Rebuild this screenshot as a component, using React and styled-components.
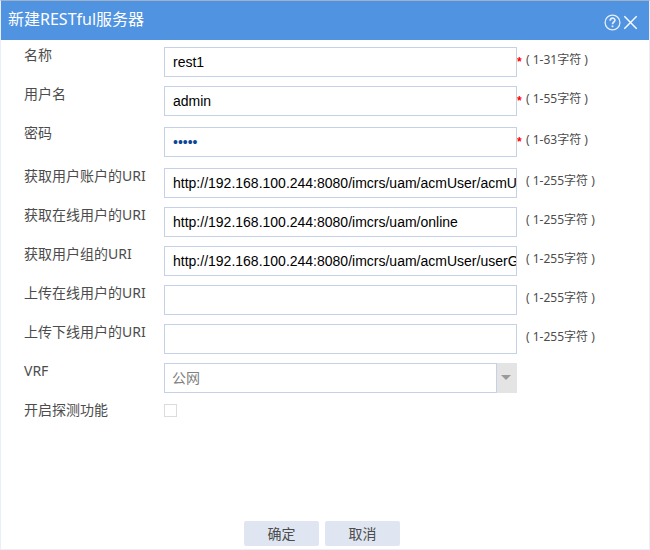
import React, { useState } from 'react'
import styled, { createGlobalStyle } from 'styled-components'

const GlobalStyle = createGlobalStyle`
  * {
    box-sizing: border-box;
  }

  body {
    margin: 0;
    background: white;
    color: #4c4c4c;
    font-family: 'Noto Sans', 'Noto Sans CJK SC', sans-serif;
    font-size: 14px;
  }
`

const Dialog = styled.form`
  min-height: 100vh;
  display: flex;
  flex-direction: column;
  border: 1px solid #e9eefa;
  border-top-color: #9fb2c9;
`

const Header = styled.header`
  height: 39px;
  padding: 0 10px 0 7px;
  background: #4f93e1;
  color: white;

  display: flex;
  justify-content: space-between;
  align-items: center;
`

const Title = styled.h1`
  margin: 0;
  font-size: 16px;
  font-weight: normal;
  line-height: 37px;
  align-self: flex-start;
`

const HeaderActions = styled.div`
  display: flex;
  align-items: center;
  gap: 1px;
  padding-top: 3px;
`

const IconButton = styled.button`
  display: flex;
  padding: 0;
  border: none;
  background: none;
  color: white;
  cursor: pointer;
`

const Fields = styled.div`
  flex: 1;
  padding: 7px 0 0 23px;
`

const Row = styled.div`
  display: grid;
  grid-template-columns: 140px minmax(0, 1fr) 132px;
  align-items: start;
  padding-bottom: 9px;
`

const Label = styled.label`
  line-height: 16px;
`

const Control = styled.div`
  position: relative;
  display: flex;
  padding: ${props => (props.$spaced ? '2px 0' : '0')};
`

const TextInput = styled.input`
  width: 100%;
  height: 30px;
  padding: 0 0 0 8px;
  border: 1px solid #c5d1e6;
  border-radius: 0;
  background: white;
  color: ${props => (props.type === 'password' ? '#0c4596' : 'black')};
  font-family: 'Liberation Sans', Arial, sans-serif;
  font-size: 14px;
  outline: none;
`

const Select = styled.select`
  appearance: none;
  width: 100%;
  height: 30px;
  padding: 0 28px 2px 7px;
  border: 1px solid #c5d1e6;
  border-right: none;
  border-radius: 0;
  background: white;
  color: #808080;
  font-family: inherit;
  font-size: 14px;
  outline: none;
`

const SelectArrow = styled.span`
  position: absolute;
  top: 0;
  right: 0;
  bottom: 0;
  width: 21px;
  padding: 0 2px 2px 0;
  border-left: 1px solid #c5d1e6;
  background: #e4e4e4;
  pointer-events: none;

  display: flex;
  justify-content: center;
  align-items: center;
`

const Checkbox = styled.input`
  appearance: none;
  width: 13px;
  height: 13px;
  margin: 2px 0 0;
  border: 1px solid #dcdcdc;
  background: white;

  &:checked {
    background: #4f93e1;
  }
`

const Hint = styled.div`
  display: flex;
  padding-top: ${props => (props.$spaced ? '6px' : '4px')};
  font-size: 12px;
  line-height: 18px;
  white-space: nowrap;
`

const Star = styled.span`
  width: 9px;
  color: #f00;
  font-family: 'Liberation Sans', Arial, sans-serif;
  font-weight: bold;
  line-height: 22px;
`

const Footer = styled.footer`
  display: flex;
  justify-content: center;
  gap: 6px;
  padding: 0 6px 3px 0;
`

const Button = styled.button`
  width: 75px;
  height: 25px;
  padding: 0;
  border: none;
  border-radius: 2px;
  background: #dfe6f2;
  color: #4c4c4c;
  font-family: inherit;
  font-size: 14px;
  line-height: 25px;
  cursor: pointer;
`

const HelpIcon = () => (
  <svg width='17' height='17' viewBox='0 0 17 17' fill='none' stroke='currentColor' opacity='0.85'>
    <circle cx='8.5' cy='8.5' r='7.4' strokeWidth='1.3' />
    <path d='M6.2 6.8C6.2 3.4 10.9 3.5 10.9 6.2C10.9 8 8.5 8 8.5 10.2' strokeWidth='1.7' />
    <path d='M8.5 11.4V13.2' strokeWidth='1.8' />
  </svg>
)

const CloseIcon = () => (
  <svg width='17' height='17' viewBox='0 0 17 17' fill='none' stroke='currentColor' strokeWidth='1.4'>
    <path d='M2.3 2.3L14.7 14.7M14.7 2.3L2.3 14.7' />
  </svg>
)

const fields = [
  { name: 'name', label: '名称', value: 'rest1', hint: '( 1-31字符 )', required: true },
  { name: 'user', label: '用户名', value: 'admin', hint: '( 1-55字符 )', required: true },
  { name: 'password', label: '密码', value: 'admin', hint: '( 1-63字符 )', required: true, type: 'password' },
  {
    name: 'accountUri',
    label: '获取用户账户的URI',
    value: 'http://192.168.100.244:8080/imcrs/uam/acmUser/acmUserList',
    hint: '( 1-255字符 )'
  },
  {
    name: 'onlineUri',
    label: '获取在线用户的URI',
    value: 'http://192.168.100.244:8080/imcrs/uam/online',
    hint: '( 1-255字符 )'
  },
  {
    name: 'groupUri',
    label: '获取用户组的URI',
    value: 'http://192.168.100.244:8080/imcrs/uam/acmUser/userGroup',
    hint: '( 1-255字符 )'
  },
  { name: 'uploadOnlineUri', label: '上传在线用户的URI', value: '', hint: '( 1-255字符 )' },
  { name: 'uploadOfflineUri', label: '上传下线用户的URI', value: '', hint: '( 1-255字符 )' }
]

const Field = ({ name, label, value, hint, required, type = 'text' }) => {
  const [text, setText] = useState(value)
  const spaced = type === 'password'

  return (
    <Row>
      <Label htmlFor={name}>{label}</Label>
      <Control $spaced={spaced}>
        <TextInput
          id={name}
          name={name}
          type={type}
          value={text}
          required={required}
          autoComplete='off'
          spellCheck={false}
          onChange={e => setText(e.target.value)}
        />
      </Control>
      <Hint $spaced={spaced}>
        <Star>{required && '*'}</Star>
        <span>{hint}</span>
      </Hint>
    </Row>
  )
}

const App = () => {
  return (
    <>
      <GlobalStyle />
      <Dialog onSubmit={e => e.preventDefault()}>
        <Header>
          <Title>新建RESTful服务器</Title>
          <HeaderActions>
            <IconButton type='button' aria-label='帮助'>
              <HelpIcon />
            </IconButton>
            <IconButton type='button' aria-label='关闭'>
              <CloseIcon />
            </IconButton>
          </HeaderActions>
        </Header>
        <Fields>
          {fields.map(field => (
            <Field key={field.name} {...field} />
          ))}
          <Row>
            <Label htmlFor='vrf'>VRF</Label>
            <Control>
              <Select id='vrf' name='vrf'>
                <option>公网</option>
              </Select>
              <SelectArrow>
                <svg width='10' height='5' viewBox='0 0 10 5' fill='#999'>
                  <path d='M0 0H10L5 5Z' />
                </svg>
              </SelectArrow>
            </Control>
          </Row>
          <Row>
            <Label htmlFor='probe'>开启探测功能</Label>
            <Control>
              <Checkbox id='probe' name='probe' type='checkbox' />
            </Control>
          </Row>
        </Fields>
        <Footer>
          <Button type='submit'>确定</Button>
          <Button type='button'>取消</Button>
        </Footer>
      </Dialog>
    </>
  )
}

export default App
